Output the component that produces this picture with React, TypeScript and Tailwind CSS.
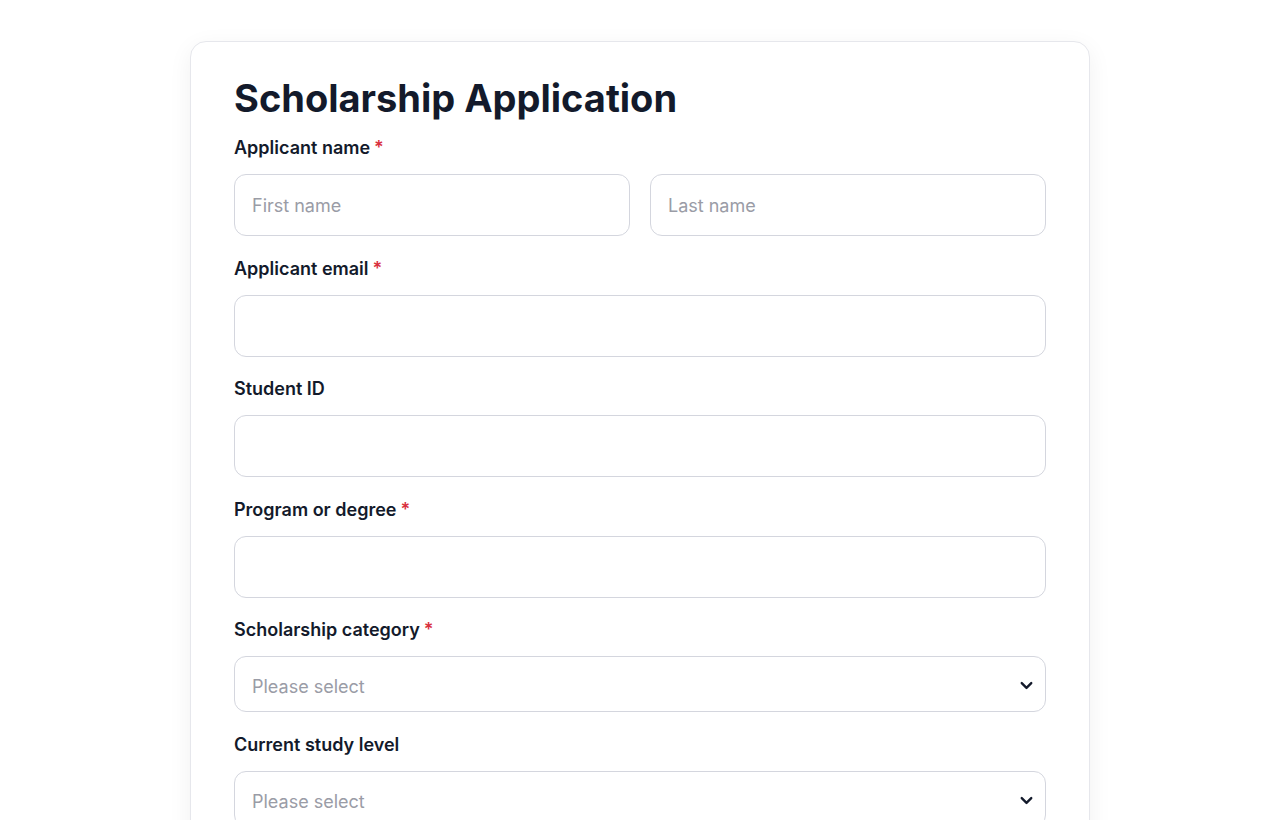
import { ChevronDown } from 'lucide-react';

type FieldProps = {
  label: string;
  required?: boolean;
  children: React.ReactNode;
};

const Field = ({ label, required = false, children }: FieldProps) => (
  <div className="flex flex-col gap-[14px]">
    <label className="text-[18px] font-semibold leading-6 text-[#131a2b]">
      {label}
      {required && <span className="ml-1 text-[#d9303e]">*</span>}
    </label>
    {children}
  </div>
);

const TextInput = ({ placeholder = '' }: { placeholder?: string }) => (
  <input
    type="text"
    placeholder={placeholder}
    className="h-[62px] w-full rounded-xl border border-[#d4d6de] bg-white px-[17px] text-[18px] text-[#131a2b] placeholder:text-[#9a9ca6] outline-none"
  />
);

const SelectInput = () => (
  <div className="relative">
    <select
      defaultValue=""
      className="h-[56px] w-full appearance-none rounded-xl border border-[#d4d6de] bg-white px-[17px] pt-[5px] text-[18px] text-[#9a9ca6] outline-none"
    >
      <option value="" disabled>
        Please select
      </option>
    </select>
    <ChevronDown
      size={19}
      strokeWidth={3}
      className="pointer-events-none absolute right-[10px] top-[20px] text-[#131a2b]"
    />
  </div>
);

export default function App() {
  return (
    <div
      className="min-h-screen w-full bg-white pt-[41px]"
      style={{ fontFamily: 'Inter, "Noto Sans", sans-serif' }}
    >
      <div className="mx-auto flex w-[900px] flex-col gap-[20.5px] rounded-2xl border border-[#e6e7ec] bg-white px-[43px] pb-10 pt-[33px] shadow-[0_6px_24px_rgba(17,24,39,0.06)]">
        <h1 className="-mb-[5.5px] text-[38px] font-bold leading-[46px] text-[#131a2b]">
          Scholarship Application
        </h1>

        <Field label="Applicant name" required>
          <div className="grid grid-cols-2 gap-5">
            <TextInput placeholder="First name" />
            <TextInput placeholder="Last name" />
          </div>
        </Field>

        <Field label="Applicant email" required>
          <TextInput />
        </Field>

        <Field label="Student ID">
          <TextInput />
        </Field>

        <Field label="Program or degree" required>
          <TextInput />
        </Field>

        <Field label="Scholarship category" required>
          <SelectInput />
        </Field>

        <Field label="Current study level">
          <SelectInput />
        </Field>
      </div>
    </div>
  );
}
